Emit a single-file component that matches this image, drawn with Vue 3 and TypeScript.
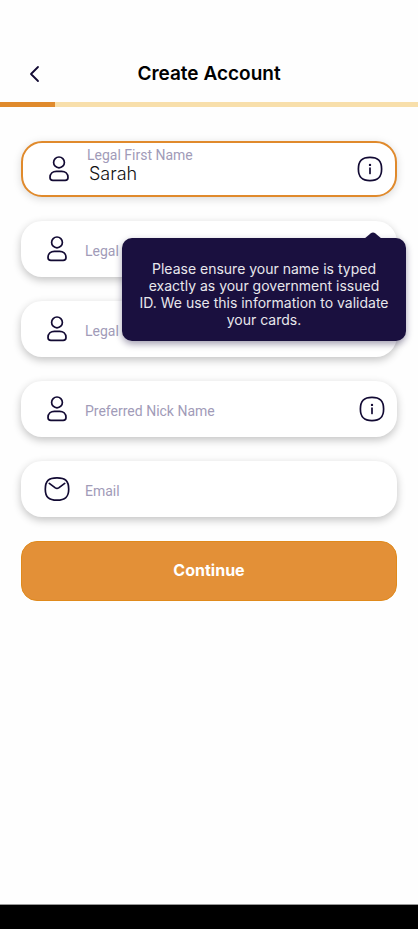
<script setup lang="ts">
import { reactive } from 'vue'

interface Field {
  id: string
  label: string
  value: string
  icon: 'person' | 'mail'
  info: boolean
  active: boolean
  type: string
}

const fields = reactive<Field[]>([
  { id: 'first-name', label: 'Legal First Name', value: 'Sarah', icon: 'person', info: true, active: true, type: 'text' },
  { id: 'middle-name', label: 'Legal Middle Name', value: '', icon: 'person', info: false, active: false, type: 'text' },
  { id: 'last-name', label: 'Legal Last Name', value: '', icon: 'person', info: false, active: false, type: 'text' },
  { id: 'nick-name', label: 'Preferred Nick Name', value: '', icon: 'person', info: true, active: false, type: 'text' },
  { id: 'email', label: 'Email', value: '', icon: 'mail', info: false, active: false, type: 'email' },
])
</script>

<template>
  <div class="screen">
    <header class="header">
      <button class="back" type="button" aria-label="Back">
        <svg width="12" height="18" viewBox="0 0 12 18" fill="none" stroke="currentColor" stroke-width="1.800" stroke-linecap="round" stroke-linejoin="round">
          <path d="M10 2L3 9L10 16" />
        </svg>
      </button>
      <h1 class="title">Create Account</h1>
    </header>
    <div class="progress"><div class="progress-fill"></div></div>

    <form class="form" @submit.prevent>
      <div v-for="field in fields" :key="field.id" class="field" :class="{ active: field.active, filled: field.value !== '' }">
        <svg v-if="field.icon === 'person'" class="icon" viewBox="0 0 28 28" fill="none" stroke="currentColor" stroke-width="1.700">
          <circle cx="14" cy="7.400" r="5.400" />
          <path d="M5 22.500C5 18.500 7.900 16.300 11.400 16.300H16.600C20.100 16.300 23 18.500 23 22.500C23 24.500 22.100 25.400 20.100 25.400H7.900C5.900 25.400 5 24.500 5 22.500Z" />
        </svg>
        <svg v-else class="icon" viewBox="0 0 28 28" fill="none" stroke="currentColor" stroke-width="1.700" stroke-linecap="round" stroke-linejoin="round">
          <path d="M14 2.800C22.400 2.800 25.700 6 25.700 14.200C25.700 22 22.200 25.200 14 25.200C5.800 25.200 2.300 22 2.300 14.200C2.300 6 5.600 2.800 14 2.800Z" />
          <path d="M6.300 8.400L12.300 12.900C13.500 13.700 14.500 13.700 15.700 12.900L21.700 8.400" />
        </svg>
        <div class="text">
          <label :for="field.id">{{ field.label }}</label>
          <input :id="field.id" v-model="field.value" :type="field.type" />
        </div>
        <button v-if="field.info" class="info" type="button" :aria-label="'About ' + field.label">
          <svg class="info-icon" viewBox="0 0 26 26" fill="none" stroke="currentColor" stroke-width="1.700" stroke-linecap="round">
            <path d="M13 1.400C21.200 1.400 24.600 4.800 24.600 13C24.600 21.200 21.200 24.600 13 24.600C4.800 24.600 1.400 21.200 1.400 13C1.400 4.800 4.800 1.400 13 1.400Z" />
            <path d="M13 12V17.500" />
            <circle cx="13" cy="8.900" r="1.200" fill="currentColor" stroke="none" />
          </svg>
        </button>
        <div v-if="field.active" class="tooltip" role="tooltip">
          <svg class="arrow" viewBox="0 0 18 7"><path d="M0 7L6.500 1.400Q9 -0.600 11.500 1.400L18 7Z" fill="currentColor" /></svg>
          Please ensure your name is typed exactly as your government issued ID.&nbsp;We use this information to validate your cards.
        </div>
      </div>
      <button class="continue" type="submit">Continue</button>
    </form>

    <div class="nav-bar"></div>
  </div>
</template>

<style>
body {
  margin: 0;
  background: #fff;
}
</style>

<style scoped>
.screen {
  min-height: 100vh;
  display: flex;
  flex-direction: column;
  background: #fefefe;
  color: #120a33;
  font-family: Inter, "Liberation Sans", sans-serif;
}
.header {
  display: grid;
  grid-template-columns: 28px 1fr 28px;
  align-items: center;
  padding: 67px 20px 21px;
}
button {
  font-family: inherit;
  border: 0;
  padding: 0;
  background: none;
  color: inherit;
  cursor: pointer;
}
.back {
  display: flex;
  justify-content: center;
  align-items: center;
  height: 14px;
}
.title {
  margin: 0;
  color: #000;
  text-align: center;
  font-size: 19px;
  font-weight: 600;
  line-height: 14px;
}
.progress {
  height: 5px;
  background: #f8dfab;
}
.progress-fill {
  width: 13.200%;
  height: 100%;
  background: #e08a2c;
}
.form {
  flex: 1;
  display: flex;
  flex-direction: column;
  gap: 24px;
  padding: 34px 21px;
}
.field {
  position: relative;
  display: flex;
  align-items: center;
  height: 56px;
  padding: 0 12px 0 22px;
  box-sizing: border-box;
  border-radius: 21px;
  background: #fff;
  box-shadow: 0 3px 8px rgba(0, 0, 0, 0.240);
}
.field.active {
  border: 2px solid #e08a2c;
  z-index: 1;
  box-shadow: 0 2px 9px rgba(0, 0, 0, 0.150);
}
.icon {
  flex: none;
  width: 28px;
  height: 28px;
}
.text {
  flex: 1;
  min-width: 0;
  display: grid;
  align-items: center;
  margin-left: 14px;
  padding-top: 4px;
  font-family: Roboto, "Liberation Sans", sans-serif;
}
.active .text {
  padding: 0 0 8px;
}
/* The label rests on the empty input and moves above it once filled. */
label,
input {
  grid-area: 1 / 1;
}
label {
  color: #a19bb8;
  font-size: 14px;
  line-height: 16px;
  pointer-events: none;
}
.filled input {
  grid-row: 2;
}
input {
  width: 100%;
  height: 20px;
  padding: 0;
  border: 0;
  outline: 0;
  background: none;
  color: #111;
  font-family: inherit;
  font-size: 14px;
}
.active input {
  padding-left: 2px;
  box-sizing: border-box;
  font-family: Inter, "Liberation Sans", sans-serif;
  font-size: 18px;
  font-weight: 300;
}
.info {
  display: flex;
}
.info-icon {
  width: 26px;
  height: 26px;
}
.tooltip {
  position: absolute;
  top: 95px;
  right: -11px;
  width: 284px;
  padding: 22px 12px 13px;
  box-sizing: border-box;
  border-radius: 10px;
  background: #1a103f;
  color: #e8e7ec;
  text-align: center;
  font-size: 14px;
  line-height: 17px;
  box-shadow: 0 3px 7px rgba(26, 16, 63, 0.400);
}
.arrow {
  position: absolute;
  top: -6px;
  right: 24px;
  width: 18px;
  height: 7px;
  color: #1a103f;
}
.continue {
  height: 60px;
  padding-bottom: 2px;
  border: 1px solid #e08a1c;
  border-radius: 16px;
  background: #e39037;
  color: #fff;
  font-size: 16px;
  font-weight: 700;
}
.nav-bar {
  height: 24px;
  border-top: 1px solid #999;
  background: #000;
}
</style>
